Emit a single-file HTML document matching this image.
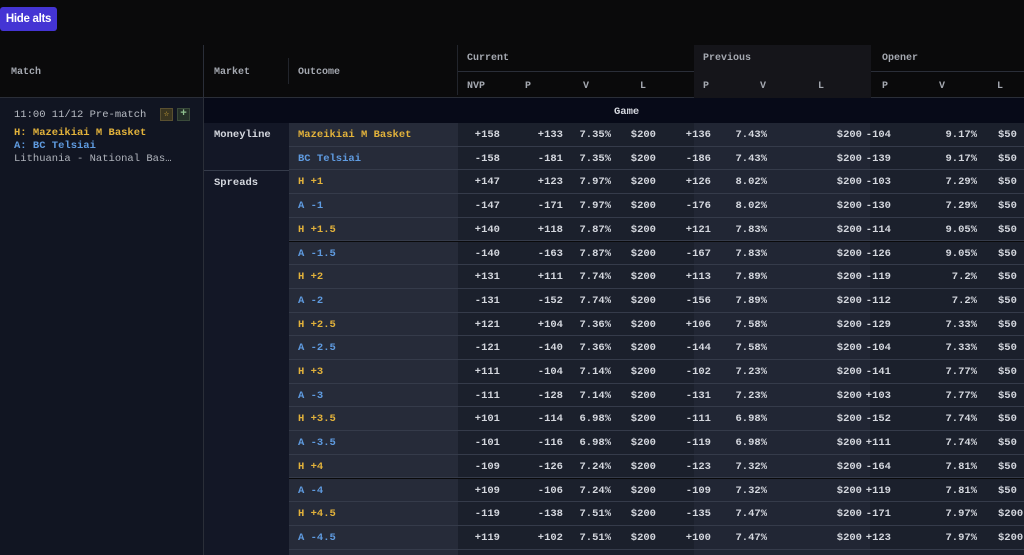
<!DOCTYPE html><html><head><meta charset="utf-8"><style>
*{margin:0;padding:0;box-sizing:border-box}
html{width:1024px;height:555px;overflow:hidden}
body{width:1024px;height:555px;background:#0a0a0b;overflow:hidden;position:relative;font-family:"Liberation Mono",monospace;font-size:10.5px;font-weight:bold;color:#d4d7de}
.abs{position:absolute}
.btn{left:0;top:7px;width:57px;height:24px;background:#4434d4;border-radius:3px;color:#fff;font-family:"Liberation Sans",sans-serif;font-size:11.5px;line-height:24px;text-align:center;letter-spacing:-.3px}
.hd{color:#a4a8b0;font-size:10px}
.row{position:absolute;left:204px;width:820px;height:23.7px}
.row span{position:absolute;top:6px;white-space:nowrap}
.oc{position:absolute;left:85px;width:169px;height:100%;background:#262b39;border-bottom:1px solid #353b4a}
.num{position:absolute;left:254px;width:566px;height:100%;background:#1b202c;border-bottom:1px solid #353b4a}
.prv{position:absolute;left:490px;width:176px;height:100%;background:#212634;border-bottom:1px solid #353b4a}
.h{color:#e2b23b}.a{color:#5f9be0}
.r{text-align:right;width:60px}
</style></head><body>
<div class="abs btn">Hide alts</div>
<div class="abs" style="left:203px;top:45px;width:1px;height:510px;background:#2a2e38"></div>
<div class="abs" style="left:0;top:97px;width:1024px;height:1px;background:#2a2e38"></div>
<div class="abs" style="left:458px;top:71px;width:566px;height:1px;background:#2a2e38"></div>
<div class="abs" style="left:694px;top:45px;width:177px;height:53px;background:#15151a"></div>
<div class="abs hd" style="left:11px;top:67px">Match</div>
<div class="abs hd" style="left:214px;top:67px">Market</div>
<div class="abs" style="left:288px;top:58px;width:1px;height:26px;background:#22252c"></div>
<div class="abs hd" style="left:298px;top:67px">Outcome</div>
<div class="abs" style="left:457px;top:45px;width:1px;height:50px;background:#22252c"></div>
<div class="abs hd" style="left:467px;top:53px">Current</div>
<div class="abs hd" style="left:703px;top:53px">Previous</div>
<div class="abs hd" style="left:882px;top:53px">Opener</div>
<div class="abs hd" style="left:467px;top:81px">NVP</div>
<div class="abs hd" style="left:525px;top:81px">P</div>
<div class="abs hd" style="left:583px;top:81px">V</div>
<div class="abs hd" style="left:640px;top:81px">L</div>
<div class="abs hd" style="left:703px;top:81px">P</div>
<div class="abs hd" style="left:760px;top:81px">V</div>
<div class="abs hd" style="left:818px;top:81px">L</div>
<div class="abs hd" style="left:882px;top:81px">P</div>
<div class="abs hd" style="left:939px;top:81px">V</div>
<div class="abs hd" style="left:997px;top:81px">L</div>
<div class="abs" style="left:0;top:98px;width:203px;height:457px;background:#111522"></div>
<div class="abs" style="left:14px;top:109px;color:#b8bcc4;font-weight:normal">11:00 11/12 Pre-match</div>
<div class="abs" style="left:160px;top:108px;width:13px;height:13px;background:#3a3520;border:1px solid #5a5030;color:#e2b23b;font-size:9px;line-height:11px;text-align:center">☆</div>
<div class="abs" style="left:177px;top:108px;width:13px;height:13px;background:#243028;border:1px solid #3a4a3a;color:#8fc08f;font-size:11px;line-height:11px;text-align:center">+</div>
<div class="abs h" style="left:14px;top:127px">H: Mazeikiai M Basket</div>
<div class="abs a" style="left:14px;top:140px">A: BC Telsiai</div>
<div class="abs" style="left:14px;top:153px;color:#b0b4bc;font-weight:normal">Lithuania - National Bas…</div>
<div class="abs" style="left:204px;top:98px;width:820px;height:25px;background:#070a18"></div>
<div class="abs" style="left:614px;top:106px;color:#d4d7de">Game</div>
<div class="abs" style="left:204px;top:123px;width:85px;height:432px;background:#131726"></div>
<div class="abs" style="left:204px;top:170px;width:85px;height:1px;background:#353b4a"></div>
<div class="abs" style="left:214px;top:129px">Moneyline</div>
<div class="abs" style="left:214px;top:177px">Spreads</div>

<div class="row" style="top:123px"><div class="oc"></div><div class="num"></div><div class="prv"></div><span class="h" style="left:94px">Mazeikiai M Basket</span><span class="r" style="left:236px">+158</span><span class="r" style="left:299px">+133</span><span class="r" style="left:347px">7.35%</span><span class="r" style="left:392px">$200</span><span class="r" style="left:447px">+136</span><span class="r" style="left:503px">7.43%</span><span class="r" style="left:598px">$200</span><span class="r" style="left:627px">-104</span><span class="r" style="left:713px">9.17%</span><span style="left:794px">$50</span></div>
<div class="row" style="top:146.7px"><div class="oc"></div><div class="num"></div><div class="prv"></div><span class="a" style="left:94px">BC Telsiai</span><span class="r" style="left:236px">-158</span><span class="r" style="left:299px">-181</span><span class="r" style="left:347px">7.35%</span><span class="r" style="left:392px">$200</span><span class="r" style="left:447px">-186</span><span class="r" style="left:503px">7.43%</span><span class="r" style="left:598px">$200</span><span class="r" style="left:627px">-139</span><span class="r" style="left:713px">9.17%</span><span style="left:794px">$50</span></div>
<div class="row" style="top:170.4px"><div class="oc"></div><div class="num"></div><div class="prv"></div><span class="h" style="left:94px">H +1</span><span class="r" style="left:236px">+147</span><span class="r" style="left:299px">+123</span><span class="r" style="left:347px">7.97%</span><span class="r" style="left:392px">$200</span><span class="r" style="left:447px">+126</span><span class="r" style="left:503px">8.02%</span><span class="r" style="left:598px">$200</span><span class="r" style="left:627px">-103</span><span class="r" style="left:713px">7.29%</span><span style="left:794px">$50</span></div>
<div class="row" style="top:194.1px"><div class="oc"></div><div class="num"></div><div class="prv"></div><span class="a" style="left:94px">A -1</span><span class="r" style="left:236px">-147</span><span class="r" style="left:299px">-171</span><span class="r" style="left:347px">7.97%</span><span class="r" style="left:392px">$200</span><span class="r" style="left:447px">-176</span><span class="r" style="left:503px">8.02%</span><span class="r" style="left:598px">$200</span><span class="r" style="left:627px">-130</span><span class="r" style="left:713px">7.29%</span><span style="left:794px">$50</span></div>
<div class="row" style="top:217.8px"><div class="oc"></div><div class="num"></div><div class="prv"></div><span class="h" style="left:94px">H +1.5</span><span class="r" style="left:236px">+140</span><span class="r" style="left:299px">+118</span><span class="r" style="left:347px">7.87%</span><span class="r" style="left:392px">$200</span><span class="r" style="left:447px">+121</span><span class="r" style="left:503px">7.83%</span><span class="r" style="left:598px">$200</span><span class="r" style="left:627px">-114</span><span class="r" style="left:713px">9.05%</span><span style="left:794px">$50</span></div>
<div class="row" style="top:241.5px"><div class="oc"></div><div class="num"></div><div class="prv"></div><span class="a" style="left:94px">A -1.5</span><span class="r" style="left:236px">-140</span><span class="r" style="left:299px">-163</span><span class="r" style="left:347px">7.87%</span><span class="r" style="left:392px">$200</span><span class="r" style="left:447px">-167</span><span class="r" style="left:503px">7.83%</span><span class="r" style="left:598px">$200</span><span class="r" style="left:627px">-126</span><span class="r" style="left:713px">9.05%</span><span style="left:794px">$50</span></div>
<div class="row" style="top:265.2px"><div class="oc"></div><div class="num"></div><div class="prv"></div><span class="h" style="left:94px">H +2</span><span class="r" style="left:236px">+131</span><span class="r" style="left:299px">+111</span><span class="r" style="left:347px">7.74%</span><span class="r" style="left:392px">$200</span><span class="r" style="left:447px">+113</span><span class="r" style="left:503px">7.89%</span><span class="r" style="left:598px">$200</span><span class="r" style="left:627px">-119</span><span class="r" style="left:713px">7.2%</span><span style="left:794px">$50</span></div>
<div class="row" style="top:288.9px"><div class="oc"></div><div class="num"></div><div class="prv"></div><span class="a" style="left:94px">A -2</span><span class="r" style="left:236px">-131</span><span class="r" style="left:299px">-152</span><span class="r" style="left:347px">7.74%</span><span class="r" style="left:392px">$200</span><span class="r" style="left:447px">-156</span><span class="r" style="left:503px">7.89%</span><span class="r" style="left:598px">$200</span><span class="r" style="left:627px">-112</span><span class="r" style="left:713px">7.2%</span><span style="left:794px">$50</span></div>
<div class="row" style="top:312.6px"><div class="oc"></div><div class="num"></div><div class="prv"></div><span class="h" style="left:94px">H +2.5</span><span class="r" style="left:236px">+121</span><span class="r" style="left:299px">+104</span><span class="r" style="left:347px">7.36%</span><span class="r" style="left:392px">$200</span><span class="r" style="left:447px">+106</span><span class="r" style="left:503px">7.58%</span><span class="r" style="left:598px">$200</span><span class="r" style="left:627px">-129</span><span class="r" style="left:713px">7.33%</span><span style="left:794px">$50</span></div>
<div class="row" style="top:336.3px"><div class="oc"></div><div class="num"></div><div class="prv"></div><span class="a" style="left:94px">A -2.5</span><span class="r" style="left:236px">-121</span><span class="r" style="left:299px">-140</span><span class="r" style="left:347px">7.36%</span><span class="r" style="left:392px">$200</span><span class="r" style="left:447px">-144</span><span class="r" style="left:503px">7.58%</span><span class="r" style="left:598px">$200</span><span class="r" style="left:627px">-104</span><span class="r" style="left:713px">7.33%</span><span style="left:794px">$50</span></div>
<div class="row" style="top:360px"><div class="oc"></div><div class="num"></div><div class="prv"></div><span class="h" style="left:94px">H +3</span><span class="r" style="left:236px">+111</span><span class="r" style="left:299px">-104</span><span class="r" style="left:347px">7.14%</span><span class="r" style="left:392px">$200</span><span class="r" style="left:447px">-102</span><span class="r" style="left:503px">7.23%</span><span class="r" style="left:598px">$200</span><span class="r" style="left:627px">-141</span><span class="r" style="left:713px">7.77%</span><span style="left:794px">$50</span></div>
<div class="row" style="top:383.7px"><div class="oc"></div><div class="num"></div><div class="prv"></div><span class="a" style="left:94px">A -3</span><span class="r" style="left:236px">-111</span><span class="r" style="left:299px">-128</span><span class="r" style="left:347px">7.14%</span><span class="r" style="left:392px">$200</span><span class="r" style="left:447px">-131</span><span class="r" style="left:503px">7.23%</span><span class="r" style="left:598px">$200</span><span class="r" style="left:627px">+103</span><span class="r" style="left:713px">7.77%</span><span style="left:794px">$50</span></div>
<div class="row" style="top:407.4px"><div class="oc"></div><div class="num"></div><div class="prv"></div><span class="h" style="left:94px">H +3.5</span><span class="r" style="left:236px">+101</span><span class="r" style="left:299px">-114</span><span class="r" style="left:347px">6.98%</span><span class="r" style="left:392px">$200</span><span class="r" style="left:447px">-111</span><span class="r" style="left:503px">6.98%</span><span class="r" style="left:598px">$200</span><span class="r" style="left:627px">-152</span><span class="r" style="left:713px">7.74%</span><span style="left:794px">$50</span></div>
<div class="row" style="top:431.1px"><div class="oc"></div><div class="num"></div><div class="prv"></div><span class="a" style="left:94px">A -3.5</span><span class="r" style="left:236px">-101</span><span class="r" style="left:299px">-116</span><span class="r" style="left:347px">6.98%</span><span class="r" style="left:392px">$200</span><span class="r" style="left:447px">-119</span><span class="r" style="left:503px">6.98%</span><span class="r" style="left:598px">$200</span><span class="r" style="left:627px">+111</span><span class="r" style="left:713px">7.74%</span><span style="left:794px">$50</span></div>
<div class="row" style="top:454.8px"><div class="oc"></div><div class="num"></div><div class="prv"></div><span class="h" style="left:94px">H +4</span><span class="r" style="left:236px">-109</span><span class="r" style="left:299px">-126</span><span class="r" style="left:347px">7.24%</span><span class="r" style="left:392px">$200</span><span class="r" style="left:447px">-123</span><span class="r" style="left:503px">7.32%</span><span class="r" style="left:598px">$200</span><span class="r" style="left:627px">-164</span><span class="r" style="left:713px">7.81%</span><span style="left:794px">$50</span></div>
<div class="row" style="top:478.5px"><div class="oc"></div><div class="num"></div><div class="prv"></div><span class="a" style="left:94px">A -4</span><span class="r" style="left:236px">+109</span><span class="r" style="left:299px">-106</span><span class="r" style="left:347px">7.24%</span><span class="r" style="left:392px">$200</span><span class="r" style="left:447px">-109</span><span class="r" style="left:503px">7.32%</span><span class="r" style="left:598px">$200</span><span class="r" style="left:627px">+119</span><span class="r" style="left:713px">7.81%</span><span style="left:794px">$50</span></div>
<div class="row" style="top:502.2px"><div class="oc"></div><div class="num"></div><div class="prv"></div><span class="h" style="left:94px">H +4.5</span><span class="r" style="left:236px">-119</span><span class="r" style="left:299px">-138</span><span class="r" style="left:347px">7.51%</span><span class="r" style="left:392px">$200</span><span class="r" style="left:447px">-135</span><span class="r" style="left:503px">7.47%</span><span class="r" style="left:598px">$200</span><span class="r" style="left:627px">-171</span><span class="r" style="left:713px">7.97%</span><span style="left:794px">$200</span></div>
<div class="row" style="top:525.9px"><div class="oc"></div><div class="num"></div><div class="prv"></div><span class="a" style="left:94px">A -4.5</span><span class="r" style="left:236px">+119</span><span class="r" style="left:299px">+102</span><span class="r" style="left:347px">7.51%</span><span class="r" style="left:392px">$200</span><span class="r" style="left:447px">+100</span><span class="r" style="left:503px">7.47%</span><span class="r" style="left:598px">$200</span><span class="r" style="left:627px">+123</span><span class="r" style="left:713px">7.97%</span><span style="left:794px">$200</span></div>
<div class="row" style="top:549.6px;height:5.4px"><div class="oc" style="border:none"></div><div class="num" style="border:none"></div><div class="prv" style="border:none"></div></div>
</body></html>
